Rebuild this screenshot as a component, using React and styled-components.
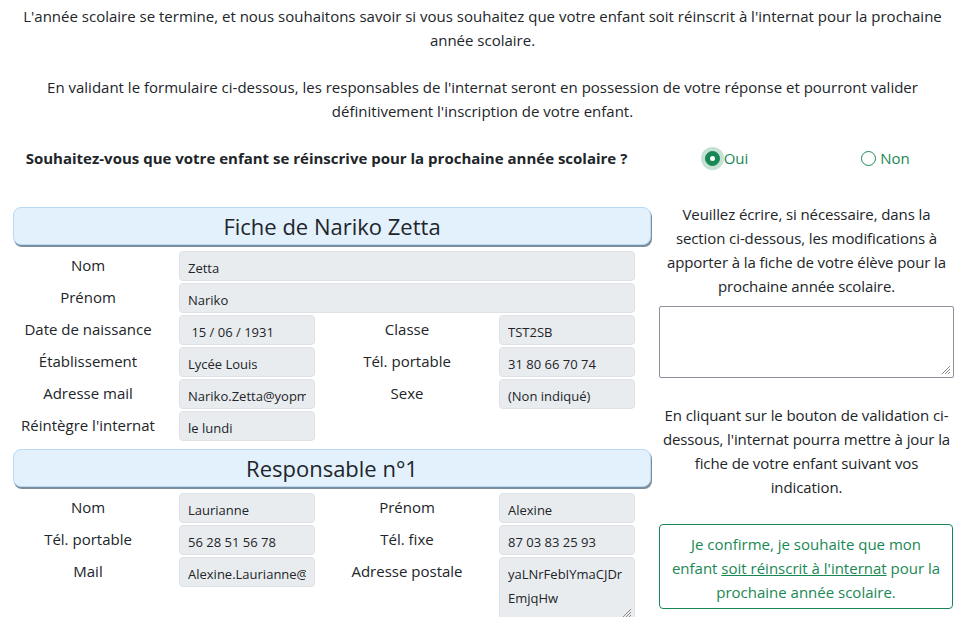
import React from "react";
import styled, { createGlobalStyle } from "styled-components";

const Global = createGlobalStyle`
  html, body { margin: 0; padding: 0; background: #fff; }
  body {
    font-family: "Open Sans", "Liberation Sans", sans-serif;
    color: #212529;
    font-size: 15px;
    line-height: 24px;
  }
  * { box-sizing: border-box; }
`;

const Page = styled.div`
  width: 965px;
  padding: 4px 0 0;
`;

const Intro = styled.p`
  margin: 0 0 23px;
  padding: 0 12px;
  text-align: center;
  font-size: 15px;
  line-height: 24px;
`;

const QuestionRow = styled.div`
  display: flex;
  align-items: center;
  height: 24px;
  margin-bottom: 32px;
`;

const Question = styled.div`
  width: 647px;
  text-align: center;
  font-weight: 700;
  font-size: 15px;
  padding-left: 6px;
`;

const Choice = styled.label`
  flex: 1;
  display: flex;
  justify-content: center;
  align-items: center;
  gap: 4px;
  color: #198754;
  font-size: 15px;
`;

const Radio = styled.span`
  width: 15px;
  height: 15px;
  border-radius: 50%;
  border: 1px solid #198754;
  background: ${(p) => (p.$checked ? "#198754" : "#fff")};
  box-shadow: ${(p) => (p.$checked ? "0 0 0 4px rgba(25,135,84,0.25)" : "none")};
  display: flex;
  align-items: center;
  justify-content: center;
  &::after {
    content: "";
    width: 5px;
    height: 5px;
    border-radius: 50%;
    background: ${(p) => (p.$checked ? "#fff" : "transparent")};
  }
`;

const Main = styled.div`
  display: flex;
  gap: 8px;
  padding-left: 13px;
`;

const Left = styled.div`
  width: 638px;
  padding-top: 5px;
`;

const Right = styled.div`
  width: 295px;
  display: flex;
  flex-direction: column;
`;

const SectionTitle = styled.div`
  height: 38px;
  background: #e3f1fd;
  border: 1px solid #b7d9f6;
  border-radius: 8px;
  box-shadow: 1px 2px 0 #7c8d9c;
  text-align: center;
  font-size: 22px;
  line-height: 36px;
  margin-bottom: 6px;
`;

const Grid = styled.div`
  display: grid;
  grid-template-columns: 150px 136px 152px 136px;
  column-gap: 16px;
  row-gap: 2px;
  margin-bottom: 8px;
`;

const Label = styled.div`
  text-align: center;
  font-size: 15px;
  line-height: 24px;
  padding-top: 2px;
  white-space: nowrap;
`;

const Field = styled.div`
  grid-column: ${(p) => (p.$wide ? "span 3" : "auto")};
  height: ${(p) => p.$h || "30px"};
  background: #e9ecef;
  border: 1px solid #dee2e6;
  border-radius: 4px;
  font-size: 13px;
  line-height: 24px;
  padding: 4px 8px 0;
  position: relative;
`;

const FieldText = styled.div`
  overflow: hidden;
  white-space: ${(p) => (p.$wrap ? "normal" : "nowrap")};
  word-break: break-all;
`;

const Grip = styled.svg`
  position: absolute;
  right: 2px;
  bottom: 2px;
`;

const Para = styled.p`
  margin: 0;
  text-align: center;
  font-size: 15px;
  line-height: 24px;
  letter-spacing: -0.1px;
`;

const TextArea = styled.div`
  height: 72px;
  margin: 8px 0 25px;
  border: 1px solid #8f8f9d;
  border-radius: 2px;
  position: relative;
`;

const Confirm = styled.div`
  margin-top: 25px;
  height: 85px;
  border: 1px solid #198754;
  border-radius: 4px;
  color: #198754;
  text-align: center;
  font-size: 15px;
  line-height: 24px;
  padding: 7px 8px;
  width: 294px;
`;

const U = styled.span`
  text-decoration: underline;
`;

const GripIcon = () => (
  <Grip width="11" height="11" viewBox="0 0 11 11">
    <path d="M10 2 L2 10 M10 5 L5 10 M10 8 L8 10" stroke="#888" strokeWidth="1" />
  </Grip>
);

const Value = ({ children, wide, h, wrap, grip }) => (
  <Field $wide={wide} $h={h}>
    <FieldText $wrap={wrap}>{children}</FieldText>
    {grip && <GripIcon />}
  </Field>
);

export default function App() {
  return (
    <Page>
      <Global />
      <Intro>
        L'année scolaire se termine, et nous souhaitons savoir si vous souhaitez que votre enfant soit réinscrit à l'internat pour la prochaine année scolaire.
      </Intro>
      <Intro>
        En validant le formulaire ci-dessous, les responsables de l'internat seront en possession de votre réponse et pourront valider définitivement l'inscription de votre enfant.
      </Intro>
      <QuestionRow>
        <Question>Souhaitez-vous que votre enfant se réinscrive pour la prochaine année scolaire ?</Question>
        <Choice>
          <Radio $checked />
          Oui
        </Choice>
        <Choice>
          <Radio />
          Non
        </Choice>
      </QuestionRow>
      <Main>
        <Left>
          <SectionTitle>Fiche de Nariko Zetta</SectionTitle>
          <Grid>
            <Label>Nom</Label>
            <Value wide>Zetta</Value>
            <Label>Prénom</Label>
            <Value wide>Nariko</Value>
            <Label>Date de naissance</Label>
            <Value>&nbsp;15 / 06 / 1931</Value>
            <Label>Classe</Label>
            <Value>TST2SB</Value>
            <Label>Établissement</Label>
            <Value>Lycée Louis</Value>
            <Label>Tél. portable</Label>
            <Value>31 80 66 70 74</Value>
            <Label>Adresse mail</Label>
            <Value>Nariko.Zetta@yopmail.com</Value>
            <Label>Sexe</Label>
            <Value>(Non indiqué)</Value>
            <Label>Réintègre l'internat</Label>
            <Value>le lundi</Value>
          </Grid>
          <SectionTitle>Responsable n°1</SectionTitle>
          <Grid>
            <Label>Nom</Label>
            <Value>Laurianne</Value>
            <Label>Prénom</Label>
            <Value>Alexine</Value>
            <Label>Tél. portable</Label>
            <Value>56 28 51 56 78</Value>
            <Label>Tél. fixe</Label>
            <Value>87 03 83 25 93</Value>
            <Label>Mail</Label>
            <Value>Alexine.Laurianne@yopmail.com</Value>
            <Label>Adresse postale</Label>
            <Value wrap h="64px" grip>
              yaLNrFebIYmaCJDrEmjqHw
            </Value>
          </Grid>
        </Left>
        <Right>
          <Para>
            Veuillez écrire, si nécessaire, dans la section ci-dessous, les modifications à apporter à la fiche de votre élève pour la prochaine année scolaire.
          </Para>
          <TextArea>
            <GripIcon />
          </TextArea>
          <Para>
            En cliquant sur le bouton de validation ci-dessous, l'internat pourra mettre à jour la fiche de votre enfant suivant vos indication.
          </Para>
          <Confirm>
            Je confirme, je souhaite que mon enfant <U>soit réinscrit à l'internat</U> pour la prochaine année scolaire.
          </Confirm>
        </Right>
      </Main>
    </Page>
  );
}
